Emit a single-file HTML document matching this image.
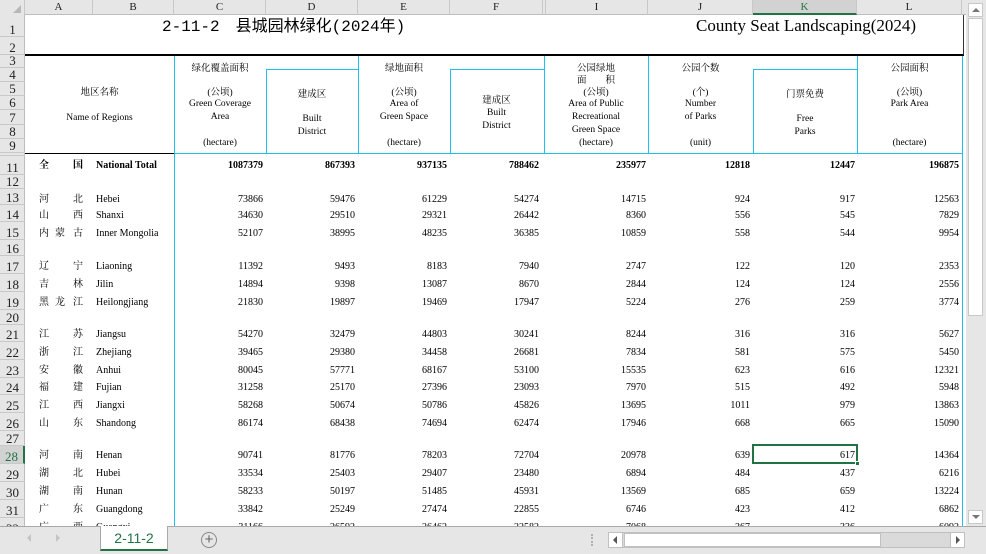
<!DOCTYPE html>
<html><head><meta charset="utf-8">
<style>
*{margin:0;padding:0;box-sizing:border-box}
body{width:986px;height:554px;overflow:hidden;background:#fff;position:relative;font-family:"Liberation Serif","Noto Serif CJK SC","Noto Sans CJK SC",serif;color:#000}
.abs{position:absolute}
.colhdr{position:absolute;top:0;left:0;width:966px;height:15px;background:#e6e6e6;border-bottom:1px solid #bdbdbd}
.ch{position:absolute;top:0;height:15px;font-size:11px;line-height:15px;text-align:center;border-right:1px solid #c8c8c8;color:#222}
.rowhdr{position:absolute;left:0;top:15px;width:25px;height:511px;background:#e6e6e6;border-right:1px solid #bdbdbd}
.rh{position:absolute;left:0;width:25px;font-size:13px;text-align:center;border-bottom:1px solid #c8c8c8;color:#222;display:flex;align-items:flex-end;justify-content:center;line-height:13px;overflow:hidden}
.row{position:absolute;left:0;width:966px;font-size:10px;height:12px;margin-top:2px}
.row span{position:absolute;top:0;white-space:nowrap;line-height:12px;height:12px}
.n{text-align:right;width:90px}
.h{position:absolute;font-size:9.5px;text-align:center;white-space:nowrap;line-height:12px;height:12px;margin-top:2px}
.cy{position:absolute;background:#1ec0ee}
.bk{position:absolute;background:#000}
</style></head><body>

<div class="colhdr">
<div class="ch" style="left:0;width:25px;background:#e6e6e6"><div style="position:absolute;right:3px;bottom:2px;width:0;height:0;border-left:8px solid transparent;border-bottom:8px solid #b8b8b8"></div></div>
<div class="ch" style="left:25px;width:68px">A</div>
<div class="ch" style="left:93px;width:81px">B</div>
<div class="ch" style="left:174px;width:92px">C</div>
<div class="ch" style="left:266px;width:92px">D</div>
<div class="ch" style="left:358px;width:92px">E</div>
<div class="ch" style="left:450px;width:93px">F</div>
<div class="ch" style="left:543px;width:3px"></div>
<div class="ch" style="left:546px;width:102px">I</div>
<div class="ch" style="left:648px;width:105px">J</div>
<div class="ch" style="left:753px;width:104px;background:#d2d2d2;color:#217346;border-bottom:2px solid #217346">K</div>
<div class="ch" style="left:857px;width:105px">L</div>
</div>

<div class="rowhdr">
<div class="rh" style="top:0;height:22px">1</div>
<div class="rh" style="top:22px;height:18px">2</div>
<div class="rh" style="top:40px;height:13px">3</div>
<div class="rh" style="top:53px;height:14px">4</div>
<div class="rh" style="top:67px;height:14px">5</div>
<div class="rh" style="top:81px;height:14px">6</div>
<div class="rh" style="top:95px;height:15px">7</div>
<div class="rh" style="top:110px;height:14px">8</div>
<div class="rh" style="top:124px;height:14px">9</div>
<div class="rh" style="top:138px;height:3px"></div>
<div class="rh" style="top:141px;height:19px">11</div>
<div class="rh" style="top:160px;height:14px">12</div>
<div class="rh" style="top:174px;height:16px">13</div>
<div class="rh" style="top:190px;height:17px">14</div>
<div class="rh" style="top:207px;height:18px">15</div>
<div class="rh" style="top:225px;height:16px">16</div>
<div class="rh" style="top:241px;height:18px">17</div>
<div class="rh" style="top:259px;height:18px">18</div>
<div class="rh" style="top:277px;height:18px">19</div>
<div class="rh" style="top:295px;height:15px">20</div>
<div class="rh" style="top:310px;height:17px">21</div>
<div class="rh" style="top:327px;height:18px">22</div>
<div class="rh" style="top:345px;height:18px">23</div>
<div class="rh" style="top:363px;height:17px">24</div>
<div class="rh" style="top:380px;height:18px">25</div>
<div class="rh" style="top:398px;height:18px">26</div>
<div class="rh" style="top:416px;height:15px">27</div>
<div class="rh" style="top:431px;height:18px;background:#d2d2d2;color:#217346;border-right:2px solid #217346">28</div>
<div class="rh" style="top:449px;height:18px">29</div>
<div class="rh" style="top:467px;height:18px">30</div>
<div class="rh" style="top:485px;height:18px">31</div>
<div class="rh" style="top:503px;height:18px">32</div>
</div>

<div class="abs" style="left:162px;top:17px;font-size:16px;line-height:20px;white-space:nowrap;font-family:'Liberation Mono','Noto Sans CJK SC',monospace">2-11-2　县城园林绿化(2024年)</div>
<div class="abs" style="left:696px;top:16px;font-size:17px;line-height:20px;white-space:nowrap">County Seat Landscaping(2024)</div>

<div class="bk" style="left:25px;top:54px;width:939px;height:2px"></div>
<div class="abs" style="left:963px;top:15px;width:1px;height:40px;background:#333"></div>
<div class="bk" style="left:25px;top:153px;width:149px;height:1px"></div>
<div class="cy" style="left:174px;top:153px;width:789px;height:1px"></div>
<div class="cy" style="left:174px;top:56px;width:1px;height:470px"></div>
<div class="cy" style="left:962px;top:56px;width:1px;height:470px"></div>
<div class="cy" style="left:358px;top:56px;width:1px;height:97px"></div>
<div class="cy" style="left:544px;top:56px;width:1px;height:97px"></div>
<div class="cy" style="left:648px;top:56px;width:1px;height:97px"></div>
<div class="cy" style="left:857px;top:56px;width:1px;height:97px"></div>
<div class="cy" style="left:266px;top:69px;width:1px;height:84px"></div>
<div class="cy" style="left:450px;top:69px;width:1px;height:84px"></div>
<div class="cy" style="left:753px;top:69px;width:1px;height:84px"></div>
<div class="cy" style="left:266px;top:69px;width:92px;height:1px"></div>
<div class="cy" style="left:450px;top:69px;width:94px;height:1px"></div>
<div class="cy" style="left:753px;top:69px;width:104px;height:1px"></div>

<div class="h" style="left:25px;width:149px;top:85px">地区名称</div>
<div class="h" style="left:25px;width:149px;top:110px">Name of Regions</div>

<div class="h" style="left:174px;width:92px;top:61px">绿化覆盖面积</div>
<div class="h" style="left:174px;width:92px;top:85px">(公顷)</div>
<div class="h" style="left:174px;width:92px;top:96px">Green Coverage</div>
<div class="h" style="left:174px;width:92px;top:109px">Area</div>
<div class="h" style="left:174px;width:92px;top:135px">(hectare)</div>

<div class="h" style="left:266px;width:92px;top:87px">建成区</div>
<div class="h" style="left:266px;width:92px;top:111px">Built</div>
<div class="h" style="left:266px;width:92px;top:124px">District</div>

<div class="h" style="left:358px;width:92px;top:61px">绿地面积</div>
<div class="h" style="left:358px;width:92px;top:85px">(公顷)</div>
<div class="h" style="left:358px;width:92px;top:96px">Area of</div>
<div class="h" style="left:358px;width:92px;top:109px">Green Space</div>
<div class="h" style="left:358px;width:92px;top:135px">(hectare)</div>

<div class="h" style="left:450px;width:93px;top:93px">建成区</div>
<div class="h" style="left:450px;width:93px;top:105px">Built</div>
<div class="h" style="left:450px;width:93px;top:118px">District</div>

<div class="h" style="left:544px;width:104px;top:61px">公园绿地</div>
<div class="h" style="left:544px;width:104px;top:73px">面　　积</div>
<div class="h" style="left:544px;width:104px;top:85px">(公顷)</div>
<div class="h" style="left:544px;width:104px;top:96px">Area of Public</div>
<div class="h" style="left:544px;width:104px;top:109px">Recreational</div>
<div class="h" style="left:544px;width:104px;top:122px">Green Space</div>
<div class="h" style="left:544px;width:104px;top:135px">(hectare)</div>

<div class="h" style="left:648px;width:105px;top:61px">公园个数</div>
<div class="h" style="left:648px;width:105px;top:85px">(个)</div>
<div class="h" style="left:648px;width:105px;top:96px">Number</div>
<div class="h" style="left:648px;width:105px;top:109px">of Parks</div>
<div class="h" style="left:648px;width:105px;top:135px">(unit)</div>

<div class="h" style="left:753px;width:104px;top:87px">门票免费</div>
<div class="h" style="left:753px;width:104px;top:111px">Free</div>
<div class="h" style="left:753px;width:104px;top:124px">Parks</div>

<div class="h" style="left:857px;width:105px;top:61px">公园面积</div>
<div class="h" style="left:857px;width:105px;top:85px">(公顷)</div>
<div class="h" style="left:857px;width:105px;top:96px">Park Area</div>
<div class="h" style="left:857px;width:105px;top:135px">(hectare)</div>

<div class="row" style="top:158px;font-weight:bold">
<span style="left:39px">全</span><span style="left:73px">国</span><span style="left:96px">National Total</span>
<span class="n" style="left:173px">1087379</span><span class="n" style="left:265px">867393</span><span class="n" style="left:357px">937135</span><span class="n" style="left:449px">788462</span><span class="n" style="left:556px">235977</span><span class="n" style="left:660px">12818</span><span class="n" style="left:765px">12447</span><span class="n" style="left:869px">196875</span>
</div>

<div class="row" style="top:192px"><span style="left:39px">河</span><span style="left:73px">北</span><span style="left:96px">Hebei</span>
<span class="n" style="left:173px">73866</span><span class="n" style="left:265px">59476</span><span class="n" style="left:357px">61229</span><span class="n" style="left:449px">54274</span><span class="n" style="left:556px">14715</span><span class="n" style="left:660px">924</span><span class="n" style="left:765px">917</span><span class="n" style="left:869px">12563</span></div>
<div class="row" style="top:208px"><span style="left:39px">山</span><span style="left:73px">西</span><span style="left:96px">Shanxi</span>
<span class="n" style="left:173px">34630</span><span class="n" style="left:265px">29510</span><span class="n" style="left:357px">29321</span><span class="n" style="left:449px">26442</span><span class="n" style="left:556px">8360</span><span class="n" style="left:660px">556</span><span class="n" style="left:765px">545</span><span class="n" style="left:869px">7829</span></div>
<div class="row" style="top:226px"><span style="left:39px">内</span><span style="left:55px">蒙</span><span style="left:73px">古</span><span style="left:96px">Inner Mongolia</span>
<span class="n" style="left:173px">52107</span><span class="n" style="left:265px">38995</span><span class="n" style="left:357px">48235</span><span class="n" style="left:449px">36385</span><span class="n" style="left:556px">10859</span><span class="n" style="left:660px">558</span><span class="n" style="left:765px">544</span><span class="n" style="left:869px">9954</span></div>

<div class="row" style="top:259px"><span style="left:39px">辽</span><span style="left:73px">宁</span><span style="left:96px">Liaoning</span>
<span class="n" style="left:173px">11392</span><span class="n" style="left:265px">9493</span><span class="n" style="left:357px">8183</span><span class="n" style="left:449px">7940</span><span class="n" style="left:556px">2747</span><span class="n" style="left:660px">122</span><span class="n" style="left:765px">120</span><span class="n" style="left:869px">2353</span></div>
<div class="row" style="top:277px"><span style="left:39px">吉</span><span style="left:73px">林</span><span style="left:96px">Jilin</span>
<span class="n" style="left:173px">14894</span><span class="n" style="left:265px">9398</span><span class="n" style="left:357px">13087</span><span class="n" style="left:449px">8670</span><span class="n" style="left:556px">2844</span><span class="n" style="left:660px">124</span><span class="n" style="left:765px">124</span><span class="n" style="left:869px">2556</span></div>
<div class="row" style="top:295px"><span style="left:39px">黑</span><span style="left:55px">龙</span><span style="left:73px">江</span><span style="left:96px">Heilongjiang</span>
<span class="n" style="left:173px">21830</span><span class="n" style="left:265px">19897</span><span class="n" style="left:357px">19469</span><span class="n" style="left:449px">17947</span><span class="n" style="left:556px">5224</span><span class="n" style="left:660px">276</span><span class="n" style="left:765px">259</span><span class="n" style="left:869px">3774</span></div>

<div class="row" style="top:327px"><span style="left:39px">江</span><span style="left:73px">苏</span><span style="left:96px">Jiangsu</span>
<span class="n" style="left:173px">54270</span><span class="n" style="left:265px">32479</span><span class="n" style="left:357px">44803</span><span class="n" style="left:449px">30241</span><span class="n" style="left:556px">8244</span><span class="n" style="left:660px">316</span><span class="n" style="left:765px">316</span><span class="n" style="left:869px">5627</span></div>
<div class="row" style="top:345px"><span style="left:39px">浙</span><span style="left:73px">江</span><span style="left:96px">Zhejiang</span>
<span class="n" style="left:173px">39465</span><span class="n" style="left:265px">29380</span><span class="n" style="left:357px">34458</span><span class="n" style="left:449px">26681</span><span class="n" style="left:556px">7834</span><span class="n" style="left:660px">581</span><span class="n" style="left:765px">575</span><span class="n" style="left:869px">5450</span></div>
<div class="row" style="top:363px"><span style="left:39px">安</span><span style="left:73px">徽</span><span style="left:96px">Anhui</span>
<span class="n" style="left:173px">80045</span><span class="n" style="left:265px">57771</span><span class="n" style="left:357px">68167</span><span class="n" style="left:449px">53100</span><span class="n" style="left:556px">15535</span><span class="n" style="left:660px">623</span><span class="n" style="left:765px">616</span><span class="n" style="left:869px">12321</span></div>
<div class="row" style="top:380px"><span style="left:39px">福</span><span style="left:73px">建</span><span style="left:96px">Fujian</span>
<span class="n" style="left:173px">31258</span><span class="n" style="left:265px">25170</span><span class="n" style="left:357px">27396</span><span class="n" style="left:449px">23093</span><span class="n" style="left:556px">7970</span><span class="n" style="left:660px">515</span><span class="n" style="left:765px">492</span><span class="n" style="left:869px">5948</span></div>
<div class="row" style="top:398px"><span style="left:39px">江</span><span style="left:73px">西</span><span style="left:96px">Jiangxi</span>
<span class="n" style="left:173px">58268</span><span class="n" style="left:265px">50674</span><span class="n" style="left:357px">50786</span><span class="n" style="left:449px">45826</span><span class="n" style="left:556px">13695</span><span class="n" style="left:660px">1011</span><span class="n" style="left:765px">979</span><span class="n" style="left:869px">13863</span></div>
<div class="row" style="top:416px"><span style="left:39px">山</span><span style="left:73px">东</span><span style="left:96px">Shandong</span>
<span class="n" style="left:173px">86174</span><span class="n" style="left:265px">68438</span><span class="n" style="left:357px">74694</span><span class="n" style="left:449px">62474</span><span class="n" style="left:556px">17946</span><span class="n" style="left:660px">668</span><span class="n" style="left:765px">665</span><span class="n" style="left:869px">15090</span></div>

<div class="row" style="top:448px"><span style="left:39px">河</span><span style="left:73px">南</span><span style="left:96px">Henan</span>
<span class="n" style="left:173px">90741</span><span class="n" style="left:265px">81776</span><span class="n" style="left:357px">78203</span><span class="n" style="left:449px">72704</span><span class="n" style="left:556px">20978</span><span class="n" style="left:660px">639</span><span class="n" style="left:765px">617</span><span class="n" style="left:869px">14364</span></div>
<div class="row" style="top:466px"><span style="left:39px">湖</span><span style="left:73px">北</span><span style="left:96px">Hubei</span>
<span class="n" style="left:173px">33534</span><span class="n" style="left:265px">25403</span><span class="n" style="left:357px">29407</span><span class="n" style="left:449px">23480</span><span class="n" style="left:556px">6894</span><span class="n" style="left:660px">484</span><span class="n" style="left:765px">437</span><span class="n" style="left:869px">6216</span></div>
<div class="row" style="top:484px"><span style="left:39px">湖</span><span style="left:73px">南</span><span style="left:96px">Hunan</span>
<span class="n" style="left:173px">58233</span><span class="n" style="left:265px">50197</span><span class="n" style="left:357px">51485</span><span class="n" style="left:449px">45931</span><span class="n" style="left:556px">13569</span><span class="n" style="left:660px">685</span><span class="n" style="left:765px">659</span><span class="n" style="left:869px">13224</span></div>
<div class="row" style="top:502px"><span style="left:39px">广</span><span style="left:73px">东</span><span style="left:96px">Guangdong</span>
<span class="n" style="left:173px">33842</span><span class="n" style="left:265px">25249</span><span class="n" style="left:357px">27474</span><span class="n" style="left:449px">22855</span><span class="n" style="left:556px">6746</span><span class="n" style="left:660px">423</span><span class="n" style="left:765px">412</span><span class="n" style="left:869px">6862</span></div>
<div class="row" style="top:520px"><span style="left:39px">广</span><span style="left:73px">西</span><span style="left:96px">Guangxi</span>
<span class="n" style="left:173px">31166</span><span class="n" style="left:265px">26592</span><span class="n" style="left:357px">26462</span><span class="n" style="left:449px">22582</span><span class="n" style="left:556px">7068</span><span class="n" style="left:660px">367</span><span class="n" style="left:765px">336</span><span class="n" style="left:869px">6092</span></div>

<div class="abs" style="left:752px;top:444px;width:106px;height:20px;border:2px solid #217346"></div>
<div class="abs" style="left:855px;top:461px;width:5px;height:5px;background:#217346;border:1px solid #fff"></div>

<div class="abs" style="left:966px;top:0;width:20px;height:526px;background:#e6e6e6"></div>
<div class="abs" style="left:968px;top:3px;width:15px;height:14px;background:#fff;border:1px solid #c8c8c8"><div style="position:absolute;left:3px;top:4px;border-left:4px solid transparent;border-right:4px solid transparent;border-bottom:4px solid #777"></div></div>
<div class="abs" style="left:968px;top:18px;width:15px;height:298px;background:#fff;border:1px solid #c8c8c8"></div>
<div class="abs" style="left:968px;top:510px;width:15px;height:14px;background:#fff;border:1px solid #c8c8c8"><div style="position:absolute;left:3px;top:4px;border-left:4px solid transparent;border-right:4px solid transparent;border-top:4px solid #777"></div></div>

<div class="abs" style="left:0;top:526px;width:986px;height:28px;background:#e6e6e6;border-top:1px solid #a8a8a8"></div>
<div class="abs" style="left:27px;top:534px;width:0;height:0;border-top:4px solid transparent;border-bottom:4px solid transparent;border-right:4px solid #c4c4c4"></div>
<div class="abs" style="left:56px;top:534px;width:0;height:0;border-top:4px solid transparent;border-bottom:4px solid transparent;border-left:4px solid #c4c4c4"></div>
<div class="abs" style="left:100px;top:526px;width:68px;height:25px;background:#fff;border-left:1px solid #a8a8a8;border-right:1px solid #a8a8a8;border-bottom:2px solid #217346;color:#217346;font-family:'Liberation Sans',sans-serif;font-size:14px;text-align:center;line-height:24px">2-11-2</div>
<div class="abs" style="left:201px;top:532px;width:16px;height:16px;border:1px solid #888;border-radius:50%;color:#666;font-family:'Liberation Sans',sans-serif;font-size:15px;line-height:14px;text-align:center">+</div>
<div class="abs" style="left:591px;top:534px;width:2px;height:12px;border-left:2px dotted #b0b0b0"></div>
<div class="abs" style="left:608px;top:532px;width:357px;height:16px;background:#dadada;border:1px solid #c0c0c0"></div>
<div class="abs" style="left:609px;top:533px;width:14px;height:14px;background:#fff;border-right:1px solid #c0c0c0"><div style="position:absolute;left:4px;top:3px;border-top:4px solid transparent;border-bottom:4px solid transparent;border-right:4px solid #555"></div></div>
<div class="abs" style="left:624px;top:533px;width:257px;height:14px;background:#fff;border:1px solid #c0c0c0"></div>
<div class="abs" style="left:950px;top:533px;width:14px;height:14px;background:#fff;border-left:1px solid #c0c0c0"><div style="position:absolute;left:5px;top:3px;border-top:4px solid transparent;border-bottom:4px solid transparent;border-left:4px solid #555"></div></div>
</body></html>
